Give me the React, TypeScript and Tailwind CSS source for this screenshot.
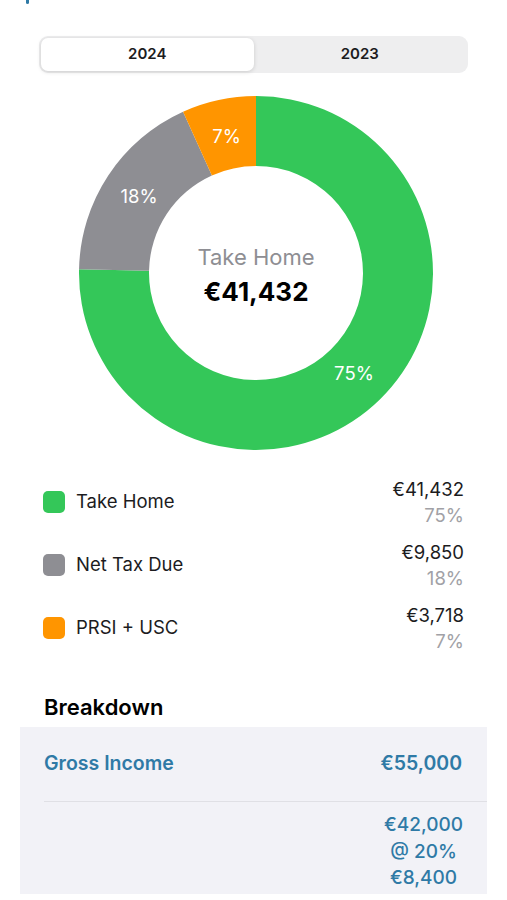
import { useState } from "react";

const GROSS = 55000;

const slices = [
  { label: "Take Home", value: 41432, pct: "75%", color: "#34c759" },
  { label: "Net Tax Due", value: 9850, pct: "18%", color: "#8e8e93" },
  { label: "PRSI + USC", value: 3718, pct: "7%", color: "#ff9500" },
];

const fmt = (n: number) => "€" + n.toLocaleString("en-US");

// point on a circle, angle in degrees clockwise from 12 o'clock
function pt(c: number, rad: number, a: number) {
  const t = (a * Math.PI) / 180;
  return [c + rad * Math.sin(t), c - rad * Math.cos(t)];
}

function ringPath(c: number, R: number, r: number, a0: number, a1: number) {
  const large = a1 - a0 > 180 ? 1 : 0;
  const [x0, y0] = pt(c, R, a0);
  const [x1, y1] = pt(c, R, a1);
  const [x2, y2] = pt(c, r, a1);
  const [x3, y3] = pt(c, r, a0);
  return `M${x0} ${y0} A${R} ${R} 0 ${large} 1 ${x1} ${y1} L${x2} ${y2} A${r} ${r} 0 ${large} 0 ${x3} ${y3} Z`;
}

function Donut() {
  const size = 356;
  const c = size / 2;
  const R = 177;
  const r = 107;
  let acc = 0;
  return (
    <svg width={size} height={size} viewBox={`0 0 ${size} ${size}`}>
      {slices.map((s) => {
        const a0 = acc;
        const a1 = acc + (s.value / GROSS) * 360;
        acc = a1;
        const mid = (a0 + a1) / 2;
        const [lx, ly] = pt(c, 140, mid);
        return (
          <g key={s.label}>
            <path d={ringPath(c, R, r, a0, a1)} fill={s.color} />
            <text
              x={lx}
              y={ly}
              fill="#ffffff"
              fontSize="18.5"
              textAnchor="middle"
              dominantBaseline="central"
            >
              {s.pct}
            </text>
          </g>
        );
      })}
      <text x={c} y={c - 16} fill="#8e8e93" fontSize="22" textAnchor="middle" dominantBaseline="central">
        Take Home
      </text>
      <text x={c} y={c + 18} fill="#000000" fontSize="26" fontWeight="700" textAnchor="middle" dominantBaseline="central">
        €41,432
      </text>
    </svg>
  );
}

export default function App() {
  const [year, setYear] = useState("2024");

  return (
    <div className="min-h-[900px] bg-white font-['Inter','Noto_Sans',sans-serif] text-black">
      <div className="h-[4px] pl-[26px]">
        <div className="h-[4px] w-[3px] rounded-b-full bg-[#2f7aa6]" />
      </div>

      {/* year picker */}
      <div className="mx-[39px] mt-[32px] flex h-[37px] rounded-[9px] bg-[#eeeeef] p-[2px]">
        {["2024", "2023"].map((y) => (
          <button
            key={y}
            onClick={() => setYear(y)}
            className={`flex-1 rounded-[7px] text-[15px] font-semibold text-[#1c1c1e] ${
              year === y ? "bg-white shadow-[0_1px_4px_rgba(0,0,0,0.15)]" : ""
            }`}
          >
            {y}
          </button>
        ))}
      </div>

      <div className="mt-[22px] flex justify-center pl-[4px]">
        <Donut />
      </div>

      {/* legend */}
      <div className="mt-[25px] flex flex-col gap-[11px] px-[43px]">
        {slices.map((s) => (
          <div key={s.label} className="flex items-center">
            <div className="h-[22px] w-[22px] rounded-[5px]" style={{ backgroundColor: s.color }} />
            <span className="ml-[11px] flex-1 text-[18.5px] text-[#1c1c1e]">{s.label}</span>
            <div className="flex flex-col items-end text-[18.5px] leading-[26px]">
              <span className="text-[#1c1c1e]">{fmt(s.value)}</span>
              <span className="text-[#a1a1a6]">{s.pct}</span>
            </div>
          </div>
        ))}
      </div>

      <h2 className="mt-[38px] px-[44px] text-[22px] font-semibold leading-[30px]">Breakdown</h2>

      <div className="mx-[20px] mt-[5px] bg-[#f2f2f7] text-[#2f7aa6]">
        <div className="flex h-[74px] items-center justify-between pl-[24px] pr-[25px] text-[19.5px] font-semibold">
          <span>Gross Income</span>
          <span>{fmt(GROSS)}</span>
        </div>
        <div className="ml-[24px] h-px bg-[#e0e0e5]" />
        <div className="flex justify-end pb-[2px] pr-[24px] pt-[10px]">
          <div className="flex flex-col items-center text-[19px] font-medium leading-[26.5px]">
            <span>€42,000</span>
            <span>@ 20%</span>
            <span>€8,400</span>
          </div>
        </div>
      </div>
    </div>
  );
}
